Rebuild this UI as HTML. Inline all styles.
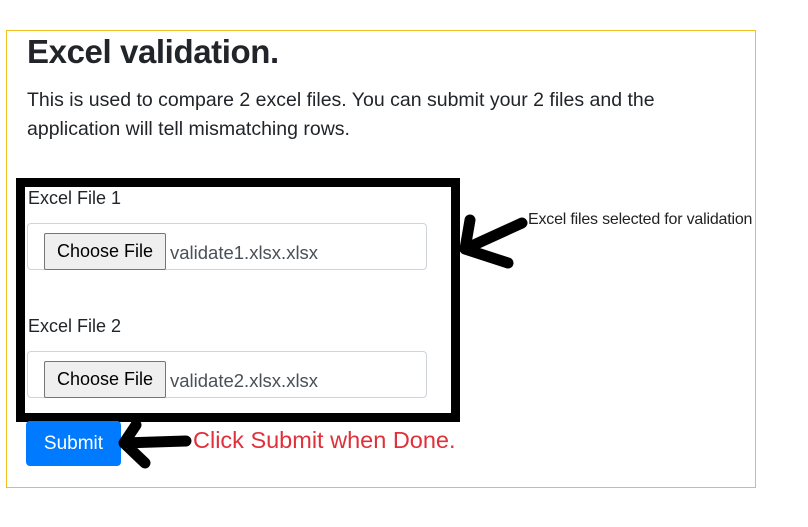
<!DOCTYPE html>
<html><head><style>
*{box-sizing:border-box}
body{margin:0;width:808px;height:527px;background:#fff;font-family:"Liberation Sans",sans-serif;color:#212529;position:relative;overflow:hidden}
.frame{position:absolute;left:6px;top:30px;width:750px;height:458px;border:1px solid #f0c020}
h1{position:absolute;left:27px;top:33px;margin:0;font-size:33px;font-weight:bold;letter-spacing:-0.4px}
p{position:absolute;left:27px;top:86px;margin:0;font-size:19.5px;line-height:29px;width:690px}
.box{position:absolute;left:16px;top:178px;width:444px;height:244px;border:9px solid #000}
.lbl{position:absolute;left:28px;font-size:18px}
.inp{position:absolute;left:27px;width:400px;height:47px;border:1px solid #ced4da;border-radius:4px}
.btn{position:absolute;left:16px;top:9px;width:122px;height:37px;background:#efefef;border:1px solid #767676;border-radius:2px;font-size:18px;text-align:center;line-height:35px;color:#000}
.fn{position:absolute;left:142px;top:10px;line-height:37px;font-size:18.5px;color:#495057}
.sub{position:absolute;left:26px;top:421px;width:95px;height:45px;background:#007bff;border-radius:4px;color:#fff;font-size:19px;text-align:center;line-height:45px}
.red{position:absolute;left:193px;top:427px;color:#e0303a;font-size:23.5px}
.note{position:absolute;left:528px;top:211px;font-size:16px;color:#222;letter-spacing:-0.2px}
</style></head><body>
<div class="frame"></div>
<h1>Excel validation.</h1>
<p>This is used to compare 2 excel files. You can submit your 2 files and the application will tell mismatching rows.</p>
<div class="box"></div>
<div class="lbl" style="top:188px">Excel File 1</div>
<div class="inp" style="top:223px"><div class="btn">Choose File</div><div class="fn">validate1.xlsx.xlsx</div></div>
<div class="lbl" style="top:316px">Excel File 2</div>
<div class="inp" style="top:351px"><div class="btn">Choose File</div><div class="fn">validate2.xlsx.xlsx</div></div>
<div class="sub">Submit</div>
<div class="red">Click Submit when Done.</div>
<div class="note">Excel files selected for validation</div>
<svg width="808" height="527" style="position:absolute;left:0;top:0" fill="none" stroke="#000" stroke-width="11" stroke-linecap="round" stroke-linejoin="round">
<path d="M522 223 L465 249 M470 220 L465 249 L508 263"/>
<path d="M186 441 L124 443 M136 425 L124 443 L145 463"/>
</svg>
</body></html>
